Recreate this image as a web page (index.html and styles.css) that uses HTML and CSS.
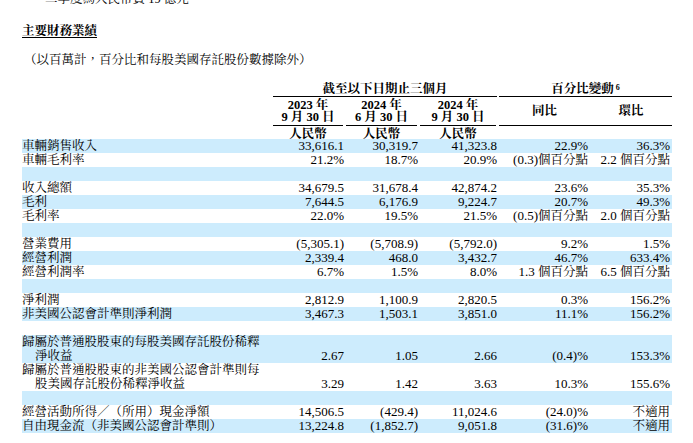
FILE: index.html
```html
<!DOCTYPE html>
<html lang="zh-Hant">
<head>
<meta charset="utf-8">
<title>主要財務業績</title>
<link rel="stylesheet" href="styles.css">
</head>
<body>
<div class="page">
  <p class="lead">二季度為人民幣負 19 億元。</p>
  <h2 class="title">主要財務業績</h2>
  <p class="note">（以百萬計，百分比和每股美國存託股份數據除外）</p>

  <div class="table">
    <div class="grid h1">
      <div></div>
      <div class="span3 uline">截至以下日期止三個月</div>
      <div class="span2 uline pct">百分比變動<sup>6</sup></div>
    </div>
    <div class="grid h2">
      <div></div>
      <div class="date">2023 年<br>9 月 30 日</div>
      <div class="date">2024 年<br>6 月 30 日</div>
      <div class="date">2024 年<br>9 月 30 日</div>
      <div class="span2 cmp">
        <div>同比</div>
        <div>環比</div>
      </div>
    </div>
    <div class="grid h3">
      <div></div>
      <div class="cur">人民幣</div>
      <div class="cur">人民幣</div>
      <div class="cur">人民幣</div>
    </div>

    <div class="grid row b"><div class="lbl">車輛銷售收入</div><div class="num">33,616.1</div><div class="num">30,319.7</div><div class="num">41,323.8</div><div class="num">22.9%</div><div class="num">36.3%</div></div>
    <div class="grid row"><div class="lbl">車輛毛利率</div><div class="num">21.2%</div><div class="num">18.7%</div><div class="num">20.9%</div><div class="num">(0.3)<span class="cj">個百分點</span></div><div class="num">2.2 <span class="cj">個百分點</span></div></div>
    <div class="grid row b"></div>
    <div class="grid row"><div class="lbl">收入總額</div><div class="num">34,679.5</div><div class="num">31,678.4</div><div class="num">42,874.2</div><div class="num">23.6%</div><div class="num">35.3%</div></div>
    <div class="grid row b"><div class="lbl">毛利</div><div class="num">7,644.5</div><div class="num">6,176.9</div><div class="num">9,224.7</div><div class="num">20.7%</div><div class="num">49.3%</div></div>
    <div class="grid row"><div class="lbl">毛利率</div><div class="num">22.0%</div><div class="num">19.5%</div><div class="num">21.5%</div><div class="num">(0.5)<span class="cj">個百分點</span></div><div class="num">2.0 <span class="cj">個百分點</span></div></div>
    <div class="grid row b"></div>
    <div class="grid row"><div class="lbl">營業費用</div><div class="num">(5,305.1)</div><div class="num">(5,708.9)</div><div class="num">(5,792.0)</div><div class="num">9.2%</div><div class="num">1.5%</div></div>
    <div class="grid row b"><div class="lbl">經營利潤</div><div class="num">2,339.4</div><div class="num">468.0</div><div class="num">3,432.7</div><div class="num">46.7%</div><div class="num">633.4%</div></div>
    <div class="grid row"><div class="lbl">經營利潤率</div><div class="num">6.7%</div><div class="num">1.5%</div><div class="num">8.0%</div><div class="num">1.3 <span class="cj">個百分點</span></div><div class="num">6.5 <span class="cj">個百分點</span></div></div>
    <div class="grid row b"></div>
    <div class="grid row"><div class="lbl">淨利潤</div><div class="num">2,812.9</div><div class="num">1,100.9</div><div class="num">2,820.5</div><div class="num">0.3%</div><div class="num">156.2%</div></div>
    <div class="grid row b"><div class="lbl">非美國公認會計準則淨利潤</div><div class="num">3,467.3</div><div class="num">1,503.1</div><div class="num">3,851.0</div><div class="num">11.1%</div><div class="num">156.2%</div></div>
    <div class="grid row"></div>
    <div class="grid row b"><div class="lbl hang">歸屬於普通股股東的每股美國存託股份稀釋<br>淨收益</div><div class="num">2.67</div><div class="num">1.05</div><div class="num">2.66</div><div class="num">(0.4)%</div><div class="num">153.3%</div></div>
    <div class="grid row"><div class="lbl hang">歸屬於普通股股東的非美國公認會計準則每<br>股美國存託股份稀釋淨收益</div><div class="num">3.29</div><div class="num">1.42</div><div class="num">3.63</div><div class="num">10.3%</div><div class="num">155.6%</div></div>
    <div class="grid row b"></div>
    <div class="grid row"><div class="lbl">經營活動所得／（所用）現金淨額</div><div class="num">14,506.5</div><div class="num">(429.4)</div><div class="num">11,024.6</div><div class="num">(24.0)%</div><div class="num"><span class="cj">不適用</span></div></div>
    <div class="grid row b"><div class="lbl">自由現金流（非美國公認會計準則）</div><div class="num">13,224.8</div><div class="num">(1,852.7)</div><div class="num">9,051.8</div><div class="num">(31.6)%</div><div class="num"><span class="cj">不適用</span></div></div>
  </div>
</div>
</body>
</html>
```

FILE: styles.css
```css
* {
  box-sizing: border-box;
  margin: 0;
  padding: 0;
}

html, body {
  background: #ffffff;
}

body {
  font-family: "Liberation Serif", "Noto Serif CJK TC", "Noto Sans CJK TC", serif;
  font-size: 13px;
  color: #000000;
  overflow: hidden;
}

.page {
  width: 693px;
  padding: 0 21px 0 22px;
}

.lead {
  margin-top: -8px;
  padding-left: 23px;
  font-size: 12.5px;
  line-height: 14px;
}

.title {
  display: inline-block;
  margin-top: 17px;
  font-size: 12.5px;
  font-weight: bold;
  line-height: 16px;
  text-decoration: underline;
  text-underline-offset: 2px;
}

.note {
  margin-top: 13px;
  padding-left: 2px;
  font-size: 12.5px;
  line-height: 16px;
}

.table {
  margin-top: 14px;
  width: 650px;
}

.grid {
  display: grid;
  grid-template-columns: 251px 73px 74px 79px 91px 82px;
}

.span3 {
  grid-column: span 3;
}

.span2 {
  grid-column: span 2;
}

.uline {
  border-bottom: 1px solid #000;
}

.h1 {
  font-size: 12.5px;
  font-weight: bold;
  line-height: 14px;
  text-align: center;
}

.h1 .span3 {
  margin-right: 2px;
}

.pct sup {
  font-size: 8px;
  vertical-align: top;
  position: relative;
  top: -1px;
  margin-left: 2px;
}

.h2 {
  font-size: 12.5px;
  line-height: 12px;
  text-align: center;
}

.date {
  font-weight: bold;
  padding-top: 2px;
  padding-bottom: 2px;
  border-bottom: 1px solid #000;
  margin-right: 3px;
}

.cmp {
  display: grid;
  grid-template-columns: 91px 82px;
  align-items: center;
  font-weight: bold;
  border-bottom: 1px solid #000;
}

.h3 {
  font-size: 12.5px;
  font-weight: bold;
  line-height: 10px;
  text-align: center;
  padding-top: 3px;
}

.cur {
  margin-right: 3px;
}

.row {
  line-height: 14px;
  min-height: 14px;
}

.row.b {
  background: #cdecfd;
}

.lbl {
  font-size: 12.5px;
  white-space: nowrap;
}

.lbl.hang {
  padding-left: 13px;
  text-indent: -13px;
}

.num {
  text-align: right;
  padding-right: 2px;
  align-self: end;
  white-space: nowrap;
}

.cj {
  font-size: 12.5px;
}
```
